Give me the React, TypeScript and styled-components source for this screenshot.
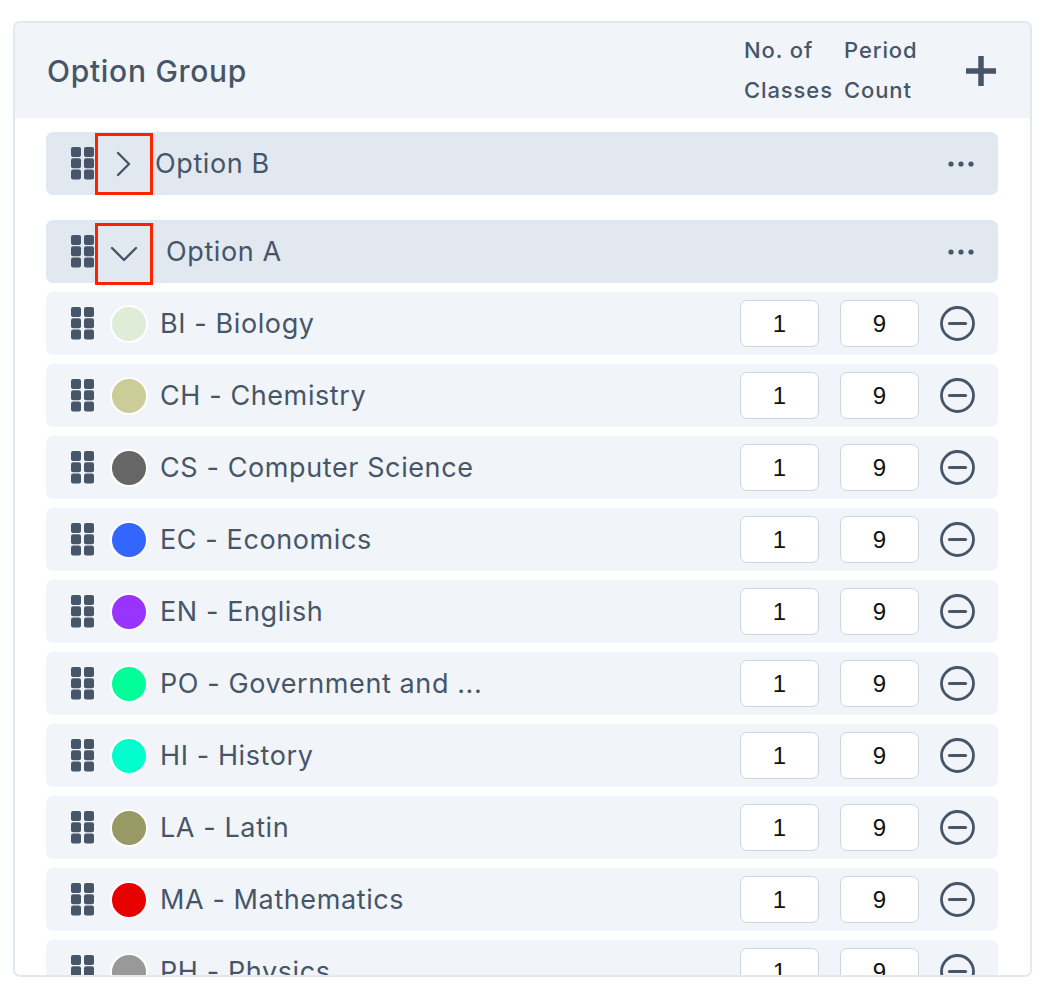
import React from "react";
import styled, { createGlobalStyle } from "styled-components";

const Global = createGlobalStyle`
  html, body { margin: 0; padding: 0; background: #ffffff; }
  body { font-family: Inter, "Noto Sans", sans-serif; color: #475569; }
`;

const Page = styled.div`
  padding: 21px 24px 0 13px;
`;

const Card = styled.div`
  width: 1019px;
  height: 956px;
  box-sizing: border-box;
  border: 2px solid #e2e8f0;
  border-radius: 7px;
  overflow: hidden;
  display: flex;
  flex-direction: column;
  background: #ffffff;
`;

const Header = styled.div`
  flex: none;
  height: 95px;
  background: #f1f5f9;
  display: flex;
  align-items: center;
  padding: 0 33px 0 32px;
`;

const Title = styled.div`
  flex: 1;
  font-size: 30px;
  font-weight: 500;
  color: #475569;
  letter-spacing: 0.7px;
`;

const ColHead = styled.div<{ $w: number }>`
  width: ${(p) => p.$w}px;
  font-size: 22px;
  font-weight: 500;
  line-height: 40px;
  letter-spacing: 0.9px;
  color: #475569;
  margin-top: -2px;
`;

const PlusBtn = styled.div`
  width: 32px;
  height: 32px;
  margin-left: 15px;
  display: flex;
  align-items: center;
  justify-content: center;
`;

const Body = styled.div`
  flex: 1;
  overflow: hidden;
  padding: 14px 32px 0 31px;
  display: flex;
  flex-direction: column;
  gap: 9px;
`;

const GroupRow = styled.div<{ $gapAfter?: number }>`
  height: 63px;
  flex: none;
  background: #e2e8f0;
  border-radius: 7px;
  display: flex;
  align-items: center;
  padding: 0 24px 0 25px;
  margin-bottom: ${(p) => p.$gapAfter ?? 0}px;
`;

const ChevronBox = styled.div<{ $top: number }>`
  width: 58px;
  height: 62px;
  box-sizing: border-box;
  border: 3px solid #ff2200;
  display: flex;
  align-items: center;
  justify-content: center;
  position: relative;
  top: ${(p) => p.$top}px;
`;

const GroupName = styled.div<{ $ml: number }>`
  flex: 1;
  margin-left: ${(p) => p.$ml}px;
  font-size: 27px;
  font-weight: 400;
  letter-spacing: 0.6px;
  color: #475569;
`;

const SubjectRow = styled.div`
  height: 63px;
  flex: none;
  background: #f1f5f9;
  border-radius: 7px;
  display: flex;
  align-items: center;
  padding: 0 23px 0 25px;
`;

const Dot = styled.div<{ $c: string }>`
  width: 38px;
  height: 38px;
  box-sizing: border-box;
  border-radius: 50%;
  border: 2px solid #ffffff;
  background: ${(p) => p.$c};
  margin-left: 15px;
  flex: none;
`;

const SubjectName = styled.div`
  flex: 1;
  margin-left: 12px;
  font-size: 27px;
  letter-spacing: 0.6px;
  color: #475569;
  white-space: nowrap;
`;

const NumBox = styled.div`
  width: 79px;
  height: 47px;
  box-sizing: border-box;
  border: 1.5px solid #cbd5e1;
  border-radius: 7px;
  background: #ffffff;
  display: flex;
  align-items: center;
  justify-content: center;
  font-family: "Liberation Sans", Arial, sans-serif;
  font-size: 24px;
  color: #111111;
  margin-right: 21px;
`;

const IconWrap = styled.div`
  display: flex;
  align-items: center;
  flex: none;
`;

const Grip = () => (
  <IconWrap>
    <svg width="24" height="33" viewBox="0 0 24 33">
      {[0, 1].map((c) =>
        [0, 1, 2].map((r) => (
          <rect
            key={`${c}-${r}`}
            x={c * 13}
            y={r * 11.3}
            width="10"
            height="10"
            rx="2"
            fill="#475569"
          />
        ))
      )}
    </svg>
  </IconWrap>
);

const ChevronRight = () => (
  <svg width="18" height="26" viewBox="0 0 18 26">
    <path d="M3 2 L14 13 L3 24" fill="none" stroke="#475569" strokeWidth="2.4" strokeLinecap="round" strokeLinejoin="round" />
  </svg>
);

const ChevronDown = () => (
  <svg width="28" height="16" viewBox="0 0 28 16">
    <path d="M2 2 L14 14 L26 2" fill="none" stroke="#475569" strokeWidth="2.4" strokeLinecap="round" strokeLinejoin="round" />
  </svg>
);

const Dots = () => (
  <svg width="26" height="6" viewBox="0 0 26 6">
    <circle cx="3" cy="3" r="2.6" fill="#475569" />
    <circle cx="13" cy="3" r="2.6" fill="#475569" />
    <circle cx="23" cy="3" r="2.6" fill="#475569" />
  </svg>
);

const Plus = () => (
  <svg width="32" height="32" viewBox="0 0 32 32">
    <path d="M16 1 V31 M1 16 H31" stroke="#475569" strokeWidth="5.5" strokeLinecap="butt" />
  </svg>
);

const MinusCircle = () => (
  <IconWrap>
    <svg width="35" height="35" viewBox="0 0 35 35">
      <circle cx="17.5" cy="17.5" r="16" fill="none" stroke="#475569" strokeWidth="2.8" />
      <path d="M9.5 17.5 H25.5" stroke="#475569" strokeWidth="3.2" strokeLinecap="round" />
    </svg>
  </IconWrap>
);

const subjects: { name: string; color: string }[] = [
  { name: "BI - Biology", color: "#dfecd8" },
  { name: "CH - Chemistry", color: "#cccc99" },
  { name: "CS - Computer Science", color: "#666666" },
  { name: "EC - Economics", color: "#3366ff" },
  { name: "EN - English", color: "#9933ff" },
  { name: "PO - Government and ...", color: "#00ff99" },
  { name: "HI - History", color: "#00ffcc" },
  { name: "LA - Latin", color: "#999966" },
  { name: "MA - Mathematics", color: "#e60000" },
  { name: "PH - Physics", color: "#999999" },
];

export default function App() {
  return (
    <Page>
      <Global />
      <Card>
        <Header>
          <Title>Option Group</Title>
          <ColHead $w={100}>
            No. of
            <br />
            Classes
          </ColHead>
          <ColHead $w={106}>
            Period
            <br />
            Count
          </ColHead>
          <PlusBtn>
            <Plus />
          </PlusBtn>
        </Header>
        <Body>
          <GroupRow $gapAfter={16}>
            <Grip />
            <ChevronBox $top={0}>
              <ChevronRight />
            </ChevronBox>
            <GroupName $ml={2}>Option B</GroupName>
            <Dots />
          </GroupRow>
          <GroupRow>
            <Grip />
            <ChevronBox $top={2}>
              <ChevronDown />
            </ChevronBox>
            <GroupName $ml={13}>Option A</GroupName>
            <Dots />
          </GroupRow>
          {subjects.map((s) => (
            <SubjectRow key={s.name}>
              <Grip />
              <Dot $c={s.color} />
              <SubjectName>{s.name}</SubjectName>
              <NumBox>1</NumBox>
              <NumBox>9</NumBox>
              <MinusCircle />
            </SubjectRow>
          ))}
        </Body>
      </Card>
    </Page>
  );
}
